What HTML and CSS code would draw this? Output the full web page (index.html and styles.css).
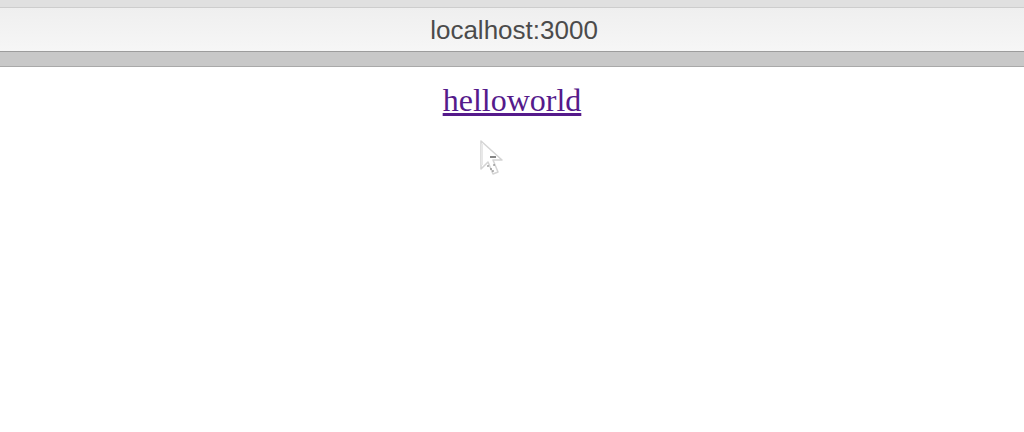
FILE: index.html
```html
<!DOCTYPE html>
<html>
<head>
<meta charset="utf-8">
<title>localhost:3000</title>
<link rel="stylesheet" href="styles.css">
</head>
<body>
<div class="chrome">
  <div class="strip"></div>
  <div class="bar"><span class="address">localhost:3000</span></div>
  <div class="band"></div>
</div>
<main class="page">
  <h1 class="title"><a class="link" href="#">helloworld</a></h1>
  <svg class="cursor" width="26" height="40" viewBox="0 0 26 40">
    <path d="M2 2 L2 30 L9 23 L14 35 L19 33 L14 21 L23 21 Z" fill="#ffffff" stroke="#d0d0d0" stroke-width="1.5" stroke-linejoin="round"/>
    <path d="M3 5 L3 26" stroke="#e6e6e6" stroke-width="2"/>
    <path d="M11 18 L17 18" stroke="#222" stroke-width="1.2"/>
    <circle cx="9" cy="27" r="0.8" fill="#555"/>
    <circle cx="12" cy="30" r="0.8" fill="#555"/>
    <circle cx="15" cy="26" r="0.8" fill="#555"/>
    <circle cx="14" cy="32" r="0.8" fill="#555"/>
  </svg>
</main>
</body>
</html>
```
FILE: styles.css
```css
html, body {
  margin: 0;
  padding: 0;
  background: #ffffff;
}
body {
  width: 1024px;
  height: 432px;
  overflow: hidden;
}
.chrome {
  display: flex;
  flex-direction: column;
}
.strip {
  height: 7px;
  background: #e0e0e0;
  border-bottom: 1px solid #cdcdcd;
}
.bar {
  height: 43px;
  background: linear-gradient(#efefef, #f6f6f6);
  border-bottom: 1px solid #9c9c9c;
  display: flex;
  align-items: center;
  justify-content: center;
}
.address {
  font-family: "Liberation Sans", Arial, sans-serif;
  font-size: 26px;
  color: #4b4b4b;
  padding-left: 4px;
  padding-top: 2px;
}
.band {
  height: 14px;
  background: #c8c8c8;
  border-bottom: 1px solid #a9a9a9;
}
.page {
  position: relative;
  display: flex;
  flex-direction: column;
  align-items: center;
  padding-top: 15px;
}
.title {
  margin: 0;
  font-family: "Liberation Serif", "Times New Roman", serif;
  font-size: 32px;
  font-weight: normal;
}
.link {
  color: #551a8b;
  text-decoration: underline;
}
.cursor {
  position: absolute;
  left: 479px;
  top: 72px;
  opacity: 0.9;
}
```
